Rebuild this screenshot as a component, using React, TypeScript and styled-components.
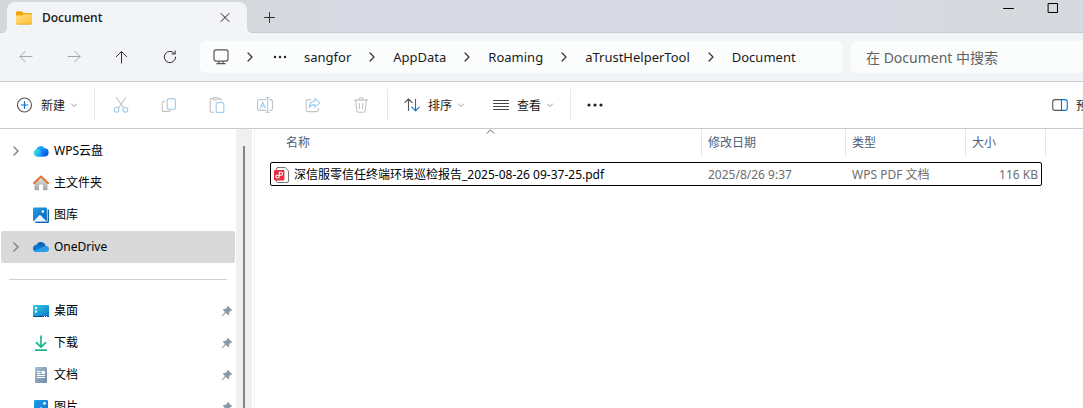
import React from "react";
import styled, { createGlobalStyle, css } from "styled-components";

const GlobalStyle = createGlobalStyle`
  *, *::before, *::after { box-sizing: border-box; }
  body {
    margin: 0;
    background: #fff;
    color: #1b1b1b;
    font: 12px/16px "Noto Sans", "Noto Sans CJK SC", sans-serif;
  }
  button, input { font: inherit; color: inherit; }
  svg { display: block; flex: none; }
`;

const Window = styled.div`
  display: flex;
  flex-direction: column;
  height: 100vh;
  overflow: hidden;
`;

const PlainButton = styled.button`
  display: flex;
  align-items: center;
  justify-content: center;
  flex: none;
  padding: 0;
  border: 0;
  background: none;
  white-space: nowrap;
`;

/* Title bar */

const TitleBar = styled.header`
  display: flex;
  align-items: flex-start;
  flex: none;
  height: 33px;
  padding: 2px 14px 0 7px;
  background: linear-gradient(90deg, #d3d7db 0%, #d5d8dd 24%, #d7dae4 34%, #d7dae5 80%, #d6d9dd 88%, #d6d9dd 97%, #d6d9e3 100%);
  box-shadow: inset 0 -1px #c8cad2;
`;

const Tab = styled.div`
  position: relative;
  display: flex;
  align-items: center;
  width: 240px;
  height: 31px;
  padding: 0 14px 0 9px;
  border-radius: 8px 8px 0 0;
  background: #f3f4f7;
  font-family: "Open Sans", sans-serif;
  font-weight: 600;

  &::before, &::after {
    content: "";
    position: absolute;
    bottom: 0;
    width: 4px;
    height: 4px;
  }
  &::before {
    right: 100%;
    background: radial-gradient(circle at 0 0, transparent 3px, #f3f4f7 4px);
  }
  &::after {
    left: 100%;
    background: radial-gradient(circle at 100% 0, transparent 3px, #f3f4f7 4px);
  }
`;

const TabTitle = styled.span`
  flex: 1;
  padding-left: 10px;
`;

const TabButton = styled(PlainButton)`
  width: 16px;
  height: 30px;
`;

const NewTabButton = styled(TabButton)`
  width: 44px;
`;

const CaptionButtons = styled.div`
  display: flex;
  gap: 11px;
  margin-left: auto;
`;

const CaptionButton = styled(PlainButton)`
  width: 33px;
  height: 11px;
`;

/* Navigation bar */

const NavBar = styled.div`
  display: flex;
  align-items: center;
  flex: none;
  height: 49px;
  padding-left: 2px;
  border-bottom: 1px solid #c8cad2;
  background: #f3f4f7;
`;

const NavButton = styled(PlainButton)`
  width: 48px;
  height: 32px;
  color: #333;
  &:disabled { color: #a3a5a8; }
`;

const AddressBar = styled.nav`
  display: flex;
  align-items: center;
  flex: 1;
  min-width: 0;
  height: 32px;
  margin: 0 8px 0 6px;
  padding-left: 13px;
  border-radius: 6px;
  background: #fbfdfd;
  overflow: hidden;
  font-size: 13px;
`;

const Separator = styled.span`
  display: flex;
  justify-content: center;
  flex: none;
  width: 42px;
`;

const Crumb = styled(PlainButton)<{ $first: boolean }>`
  margin-left: ${(p) => (p.$first ? 15 : 0)}px;
`;

const SearchBox = styled.input`
  flex: none;
  width: 232px;
  height: 32px;
  padding: 0 15px;
  border: 0;
  border-radius: 6px 0 0 6px;
  background: #fbfdfd;
  font-size: 14px;
  &::placeholder { color: #606264; opacity: 1; }
`;

/* Command bar */

const CommandBar = styled.div`
  display: flex;
  align-items: center;
  flex: none;
  height: 47px;
  border-bottom: 1px solid #c8cad2;
  background: #fff;
`;

const Command = styled(PlainButton)<{ $width: number }>`
  justify-content: flex-start;
  gap: 5px;
  width: ${(p) => p.$width}px;
  height: 32px;
`;

const CommandLabel = styled.span`
  padding: 2px 0 0 3px;
`;

const IconCommand = styled(PlainButton)`
  width: 48px;
  height: 32px;
`;

const CommandGroup = styled.div<{ $start: number; $end?: number }>`
  display: flex;
  padding: 0 ${(p) => p.$end ?? 0}px 0 ${(p) => p.$start}px;
  border-right: 1px solid #e9e9ec;
`;

const PreviewCommand = styled(Command)`
  margin-left: auto;
  overflow: hidden;
`;

/* Body */

const Body = styled.div`
  display: flex;
  flex: 1;
  min-height: 0;
`;

const Sidebar = styled.nav`
  flex: none;
  width: 236px;
  padding: 6px 1px 0;
  overflow: hidden;
  color: #000;
`;

const SideList = styled.ul`
  margin: 0;
  padding: 0;
  list-style: none;
`;

const SideItem = styled.li<{ $selected?: boolean }>`
  display: flex;
  align-items: center;
  height: 32px;
  padding: 0 2px 0 8px;
  border-radius: 2px;
  ${(p) => p.$selected && css`background: #d9d9d9;`}
`;

const Expander = styled.span`
  display: flex;
  justify-content: center;
  width: 13px;
  margin-right: 11px;
`;

const SideLink = styled.a`
  display: flex;
  align-items: center;
  flex: 1;
  gap: 5px;
  color: inherit;
  text-decoration: none;
`;

const SideDivider = styled.hr`
  height: 1px;
  margin: 16px 8px 15px;
  border: 0;
  background: #d0d0d0;
`;

const ScrollTrack = styled.div`
  display: flex;
  justify-content: center;
  flex: none;
  width: 16px;
  padding-top: 17px;
  background: #f0f0f0;
`;

const ScrollThumb = styled.div`
  width: 2px;
  background: #858585;
`;

const Content = styled.main`
  flex: 1;
  min-width: 0;
  margin-left: 2px;
  padding-left: 15px;
  border-left: 1px solid #f3f3f3;
  overflow: hidden;
`;

const FileTable = styled.table`
  width: 772px;
  table-layout: fixed;
  border-spacing: 0;
`;

const HeadCell = styled.th<{ $indent: number; $edge?: number }>`
  position: relative;
  height: 33px;
  padding: 6px 0 0 ${(p) => p.$indent}px;
  vertical-align: top;
  text-align: left;
  font-weight: 400;
  color: #4c607a;

  &::after {
    content: "";
    position: absolute;
    top: 0;
    right: -${(p) => p.$edge ?? 0}px;
    width: 1px;
    height: 27px;
    background: #e5e5e5;
  }
`;

const SortMark = styled.svg`
  position: absolute;
  top: 0;
  left: 216px;
`;

const FileRow = styled.tr`
  outline: 1px solid #000;
  outline-offset: -1px;
  border-radius: 2px;
`;

const Cell = styled.td<{ $right?: boolean }>`
  height: 24px;
  padding: 2px 4px 0 6px;
  color: #6d6d6d;
  white-space: nowrap;
  text-align: ${(p) => (p.$right ? "right" : "left")};
`;

const FileName = styled.a`
  display: flex;
  align-items: center;
  gap: 4px;
  margin-left: -2px;
  color: #000;
  text-decoration: none;
`;

/* Icons */

const Stroke = ({ d, color = "currentColor", size = 16, width = 1 }: { d: string; color?: string; size?: number; width?: number }) => (
  <svg width={size} height={size} viewBox={`0 0 ${size} ${size}`} fill="none" stroke={color} strokeWidth={width} strokeLinecap="round" strokeLinejoin="round">
    <path d={d} />
  </svg>
);

const ChevronRight = ({ color = "#333", width = 1.2 }: { color?: string; width?: number }) => (
  <Stroke size={10} color={color} width={width} d="M3 1 7 5 3 9" />
);
const ChevronDown = () => <Stroke size={8} color="#999" d="M1.5 3 4 5.5 6.5 3" />;

const Dots = ({ r, gap }: { r: number; gap: number }) => (
  <svg width="18" height="16" viewBox="0 0 18 16" fill="#222">
    <circle cx={9 - gap} cy="8" r={r} />
    <circle cx="9" cy="8" r={r} />
    <circle cx={9 + gap} cy="8" r={r} />
  </svg>
);

const FolderIcon = () => (
  <svg width="16" height="14" viewBox="0 0 16 14">
    <defs>
      <linearGradient id="folder" x1="0" y1="0" x2="1" y2="1">
        <stop stopColor="#ffe08a" />
        <stop offset="1" stopColor="#ffc02e" />
      </linearGradient>
    </defs>
    <path d="M0 1.5Q0 .3 1.2 .3H5.3Q6 .3 6.5 .9L7.8 2H15Q16 2 16 3V6H0Z" fill="#f2a60d" />
    <path d="M0 4.6H5.5Q6.2 4.6 6.8 4L7.6 3.2H15Q16 3.2 16 4.2V12.3Q16 13.5 14.8 13.5H1.2Q0 13.5 0 12.3Z" fill="url(#folder)" />
    <path d="M.3 12.8H15.7Q15.4 13.6 14.8 13.6H1.2Q.5 13.6 .3 12.8Z" fill="#e6a325" />
  </svg>
);

const MonitorIcon = () => (
  <svg width="16" height="16" viewBox="0 0 16 16" fill="none" stroke="#555" strokeWidth="1.2">
    <rect x="1" y=".9" width="14" height="11.2" rx="2" />
    <path d="M6 12.3V14.5M10 12.3V14.5M3.5 14.7H12.5" />
  </svg>
);

const NewIcon = () => (
  <svg width="16" height="16" viewBox="0 0 16 16" fill="none" strokeLinecap="round">
    <circle cx="7.5" cy="8" r="7" stroke="#555" strokeWidth="1.1" />
    <path d="M7.5 4.7V11.3M4.2 8H10.8" stroke="#0a74cc" strokeWidth="1.2" />
  </svg>
);

const GREY = "#c3c4c5";
const BLUE = "#9fcdf0";

const CutIcon = () => (
  <svg width="16" height="16" viewBox="0 0 16 16" fill="none" strokeWidth="1.1" strokeLinecap="round">
    <path d="M3.5 .8 10.6 11M12.5 .8 5.4 11" stroke={GREY} />
    <circle cx="3.6" cy="12.7" r="2.4" stroke={BLUE} />
    <circle cx="12.4" cy="12.7" r="2.4" stroke={BLUE} />
  </svg>
);
const CopyIcon = () => (
  <svg width="16" height="16" viewBox="0 0 16 16" fill="none" strokeWidth="1.1" strokeLinecap="round">
    <path d="M4 4.2H3.2Q1.2 4.2 1.2 6.2V12.4Q1.2 14.4 3.2 14.4H7.6Q9.4 14.4 9.8 12.9" stroke={GREY} />
    <rect x="6.2" y="1.6" width="8.3" height="10.6" rx="2" stroke={BLUE} />
  </svg>
);
const PasteIcon = () => (
  <svg width="16" height="16" viewBox="0 0 16 16" fill="none" strokeWidth="1.1" strokeLinecap="round">
    <path d="M5 15.3H2.4Q1.2 15.3 1.2 14V2.8Q1.2 1.6 2.4 1.6H4M9.5 1.6H11Q12.2 1.6 12.2 2.8V3.8" stroke={GREY} />
    <rect x="4" y=".6" width="5.5" height="2.1" rx="1" stroke={GREY} />
    <rect x="7.2" y="5.6" width="7.6" height="9.8" rx="1" stroke={BLUE} />
  </svg>
);
const RenameIcon = () => (
  <svg width="18" height="16" viewBox="0 0 18 16" fill="none" strokeWidth="1.1" strokeLinecap="round" strokeLinejoin="round">
    <path d="M9.5 2.6H3.8Q1.5 2.6 1.5 4.8V11.2Q1.5 13.4 3.8 13.4H9.5M13.8 2.6H14.4Q16.5 2.6 16.5 4.8V11.2Q16.5 13.4 14.4 13.4H13.8" stroke={GREY} />
    <path d="M4.2 11 6.7 5 9.2 11M5 9H8.4M11.6 .8V15.2M9.8 .7H13.4M9.8 15.3H13.4" stroke={BLUE} />
  </svg>
);
const ShareIcon = () => (
  <svg width="16" height="16" viewBox="0 0 16 16" fill="none" strokeWidth="1.1" strokeLinecap="round" strokeLinejoin="round">
    <path d="M5.8 2.6H3.3Q1.2 2.6 1.2 4.7V12.5Q1.2 14.6 3.3 14.6H11.4Q13.5 14.6 13.5 12.5V11.3" stroke={GREY} />
    <path d="M9.8 1.4 15 5.8 9.8 10.2V7.6Q6.2 7.4 4.2 10.6 4.6 4.4 9.8 3.9Z" stroke={BLUE} />
  </svg>
);
const TrashIcon = () => (
  <svg width="16" height="16" viewBox="0 0 16 16" fill="none" stroke={GREY} strokeWidth="1.1" strokeLinecap="round" strokeLinejoin="round">
    <path d="M1.2 3.1H14.8M5.8 3Q5.8 .8 8 .8T10.2 3M2.6 3.2 3.8 13.8Q4 15.3 5.4 15.3H10.6Q12 15.3 12.2 13.8L13.4 3.2M6.4 6.5V11.7M9.6 6.5V11.7" />
  </svg>
);
const SortIcon = () => (
  <svg width="16" height="16" viewBox="0 0 16 16" fill="none" strokeWidth="1.1" strokeLinecap="round" strokeLinejoin="round">
    <path d="M4.5 13.4V2M.8 5.7 4.5 2 8.2 5.7" stroke="#555" />
    <path d="M11.5 2.2V13.8M7.8 10.1 11.5 13.8 15.2 10.1" stroke="#0a74cc" />
  </svg>
);
const ViewIcon = () => <Stroke color="#444" d="M.5 3.5H15.5M.5 6.5H15.5M.5 9.5H15.5M.5 12.5H15.5" />;
const PreviewIcon = () => (
  <svg width="16" height="16" viewBox="0 0 16 16" fill="none" strokeWidth="1.1">
    <path d="M9.5 2.6H3.2Q.7 2.6 .7 5V11Q.7 13.4 3.2 13.4H9.5" stroke="#555" />
    <path d="M9.5 2.6H12.8Q15.3 2.6 15.3 5V11Q15.3 13.4 12.8 13.4H9.5Z" stroke="#0a74cc" />
  </svg>
);

const WpsCloudIcon = () => (
  <svg width="16" height="16" viewBox="0 0 16 16">
    <defs>
      <linearGradient id="wps" x1="0" y1="0" x2="1" y2=".7">
        <stop stopColor="#35c8f5" />
        <stop offset=".5" stopColor="#1a96fa" />
        <stop offset="1" stopColor="#0a50e0" />
      </linearGradient>
      <linearGradient id="wpsFront" x1="0" y1="0" x2="1" y2=".6">
        <stop stopColor="#4be8cf" />
        <stop offset=".5" stopColor="#2cc4ec" />
        <stop offset="1" stopColor="#1a8df5" />
      </linearGradient>
    </defs>
    <path d="M4.5 13.5A3.6 3.6 0 0 1 3.2 6.6 4.6 4.6 0 0 1 11.6 5.3 4.1 4.1 0 0 1 11.4 13.5Z" fill="url(#wps)" />
    <path d="M4.5 13.5A3.6 3.6 0 1 1 7.7 8.3Q8.6 12 10.5 13.5Z" fill="url(#wpsFront)" />
  </svg>
);
const HomeIcon = () => (
  <svg width="16" height="16" viewBox="0 0 16 16">
    <defs>
      <linearGradient id="wall" x1="0" y1="0" x2="0" y2="1">
        <stop stopColor="#e2e2e2" />
        <stop offset="1" stopColor="#a5a5a7" />
      </linearGradient>
    </defs>
    <path d="M1.5 7.5 8 1.5 14.5 7.5V14.2Q14.5 15.2 13.5 15.2H10V10.5Q10 9.5 9 9.5H7Q6 9.5 6 10.5V15.2H2.5Q1.5 15.2 1.5 14.2Z" fill="url(#wall)" />
    <path d="M.9 8.2 8 1.4 15.1 8.2" fill="none" stroke="#e5701f" strokeWidth="1.9" strokeLinecap="round" strokeLinejoin="round" />
  </svg>
);
const GalleryIcon = () => (
  <svg width="16" height="16" viewBox="0 0 16 16">
    <defs>
      <linearGradient id="gallery" x1="0" y1="0" x2="1" y2="1">
        <stop stopColor="#1f9fe6" />
        <stop offset="1" stopColor="#0862b8" />
      </linearGradient>
    </defs>
    <path d="M14.6 2.5H15.3Q16 2.5 16 3.2V14.8Q16 16 14.8 16H3Q2.2 16 2.2 15.2V14.8H13.4Q14.6 14.8 14.6 13.6Z" fill="#0b66b8" />
    <rect y=".5" width="13.9" height="13.8" rx="1.2" fill="url(#gallery)" />
    <path d="M1 13.7 6.3 8.2Q6.9 7.6 7.5 8.2L13 13.7Q12.8 14 12 14H2Q1.2 14 1 13.7Z" fill="#eef7ff" />
    <circle cx="9.8" cy="4.5" r="1.3" fill="#fff" />
  </svg>
);
const PicturesIcon = () => (
  <svg width="16" height="16" viewBox="0 0 16 16">
    <defs>
      <linearGradient id="pictures" x1="0" y1="0" x2="1" y2="1">
        <stop stopColor="#1f9fe6" />
        <stop offset="1" stopColor="#0f6fd0" />
      </linearGradient>
    </defs>
    <rect x="1" y="1" width="14" height="14" rx="1.2" fill="url(#pictures)" />
    <path d="M2 14 7.3 8.5Q8 7.9 8.7 8.5L14 14Q13.8 14.5 13 14.5H3Q2.2 14.5 2 14Z" fill="#eef7ff" />
    <circle cx="11.5" cy="4.4" r="1.3" fill="#fff" />
  </svg>
);
const OneDriveIcon = () => (
  <svg width="16" height="16" viewBox="0 0 16 16">
    <path d="M3.6 5.4A4.9 4.9 0 0 1 12.6 6.6L8 10Z" fill="#0a64b8" />
    <path d="M2.9 13A3.6 3.6 0 0 1 .1 8.4Q1.2 5.6 4.2 5.6 6 5.6 9.8 8.6L4 13Z" fill="#0b78d1" />
    <path d="M9.4 8.2Q11 6.4 12.8 6.7 16 7.2 16 10 16 13 12.9 13H3Q1.8 13 1 11.9Z" fill="#2a9de8" />
  </svg>
);
const DesktopIcon = () => (
  <svg width="16" height="16" viewBox="0 0 16 16">
    <defs>
      <linearGradient id="desk" x1="0" y1="0" x2="1" y2="1">
        <stop stopColor="#2ed3e0" />
        <stop offset="1" stopColor="#0b6fd0" />
      </linearGradient>
    </defs>
    <rect y="2" width="16" height="12" rx="1" fill="url(#desk)" />
    <path d="M0 13H16Q16 14 15 14H1Q0 14 0 13Z" fill="#0b4a88" />
    <path d="M2 4H4V6H2ZM2 7.5H4V9.5H2ZM11 13H12V14H11ZM13 13H14V14H13Z" fill="#fff" />
  </svg>
);
const DownloadIcon = () => (
  <svg width="16" height="16" viewBox="0 0 16 16" fill="none" stroke="#1bb58f" strokeWidth="1.7" strokeLinecap="round" strokeLinejoin="round">
    <path d="M8 1V12M3.4 7.6 8 12.2 12.6 7.6M2.8 15.2H13.2" />
  </svg>
);
const DocumentIcon = () => (
  <svg width="16" height="16" viewBox="0 0 16 16">
    <defs>
      <linearGradient id="doc" x1="0" y1="0" x2="1" y2="1">
        <stop stopColor="#a9bed2" />
        <stop offset="1" stopColor="#6d89a8" />
      </linearGradient>
    </defs>
    <rect x="2" width="12" height="16" rx="1.2" fill="url(#doc)" />
    <path d="M4 4.5H7.5M4 6.5H7.5M4 8.5H12M4 10.5H12" stroke="#fff" />
    <rect x="8.6" y="4" width="3.4" height="3" fill="#fff" />
  </svg>
);
const PinIcon = () => (
  <svg width="12" height="12" viewBox="0 0 12 12" fill="#8b9aa5">
    <path d="M6.7 .8 11.2 5.2 10.4 5.9 9.7 5.8 8.2 7.5 8.2 9.6 7.3 10.3 4.9 8 1.2 11.3 .7 10.8 4 7.1 1.8 4.8 2.6 3.9 4.7 3.8 6.3 2.3 6.1 1.5Z" />
  </svg>
);
const PdfIcon = () => (
  <svg width="16" height="16" viewBox="0 0 16 16" fill="none">
    <path d="M3 .5H11.2L14.5 3.8V14Q14.5 15.5 13 15.5H3.8Q2.5 15.5 2.5 14.2V2Q2.5 .5 4 .5" fill="#fff" stroke="#777" />
    <rect x="0" y="3" width="10.4" height="10.4" rx="1" fill="#ee2d3c" />
    <path d="M5.3 9.6V5.2H7Q8.6 5.2 8.6 6.7T7 8.3H3.2Q1.8 8.3 1.8 9.6T3.4 11 5.3 9.6" stroke="#fff" strokeWidth="1.1" />
  </svg>
);

const crumbs = ["sangfor", "AppData", "Roaming", "aTrustHelperTool", "Document"];

const editCommands = [
  { label: "剪切", icon: <CutIcon /> },
  { label: "复制", icon: <CopyIcon /> },
  { label: "粘贴", icon: <PasteIcon /> },
  { label: "重命名", icon: <RenameIcon /> },
  { label: "共享", icon: <ShareIcon /> },
  { label: "删除", icon: <TrashIcon /> },
];

type Place = { name: string; icon: React.ReactNode; expandable?: boolean; selected?: boolean; pinned?: boolean };

const roots: Place[] = [
  { name: "WPS云盘", icon: <WpsCloudIcon />, expandable: true },
  { name: "主文件夹", icon: <HomeIcon /> },
  { name: "图库", icon: <GalleryIcon /> },
  { name: "OneDrive", icon: <OneDriveIcon />, expandable: true, selected: true },
];

const pinned: Place[] = [
  { name: "桌面", icon: <DesktopIcon />, pinned: true },
  { name: "下载", icon: <DownloadIcon />, pinned: true },
  { name: "文档", icon: <DocumentIcon />, pinned: true },
  { name: "图片", icon: <PicturesIcon />, pinned: true },
];

const Places = ({ items }: { items: Place[] }) => (
  <SideList>
    {items.map((p) => (
      <SideItem key={p.name} $selected={p.selected}>
        <Expander>{p.expandable && <ChevronRight color="#858585" width={1.5} />}</Expander>
        <SideLink href="#">
          {p.icon}
          {p.name}
        </SideLink>
        {p.pinned && <PinIcon />}
      </SideItem>
    ))}
  </SideList>
);

export default function App() {
  return (
    <Window>
      <GlobalStyle />
      <TitleBar>
        <Tab>
          <FolderIcon />
          <TabTitle>Document</TabTitle>
          <TabButton aria-label="关闭标签页">
            <Stroke size={10} color="#222" d="M1 .5 9 8.5M9 .5 1 8.5" />
          </TabButton>
        </Tab>
        <NewTabButton aria-label="新建标签页">
          <Stroke size={11} color="#333" d="M5.5 .5V10.5M.5 5.5H10.5" />
        </NewTabButton>
        <CaptionButtons>
          <CaptionButton aria-label="最小化">
            <Stroke size={11} color="#000" d="M.5 6.5H10.5" />
          </CaptionButton>
          <CaptionButton aria-label="最大化">
            <Stroke size={11} color="#000" d="M1.5 1.5H10.5V10.5H1.5Z" />
          </CaptionButton>
        </CaptionButtons>
      </TitleBar>

      <NavBar>
        <NavButton aria-label="后退" disabled>
          <Stroke d="M14 7.5H2M7.2 2.3 2 7.5 7.2 12.7" />
        </NavButton>
        <NavButton aria-label="前进" disabled>
          <Stroke d="M2 7.5H14M8.8 2.3 14 7.5 8.8 12.7" />
        </NavButton>
        <NavButton aria-label="向上">
          <Stroke d="M7.5 14V2.5M2.3 7.7 7.5 2.5 12.7 7.7" />
        </NavButton>
        <NavButton aria-label="刷新">
          <Stroke d="M12.6 4.6A5.7 5.7 0 1 0 13.7 8M13.2 2V5H10" />
        </NavButton>
        <AddressBar aria-label="地址">
          <PlainButton aria-label="此电脑">
            <MonitorIcon />
          </PlainButton>
          <Separator>
            <ChevronRight />
          </Separator>
          <PlainButton aria-label="更多位置">
            <Dots r={1.2} gap={5} />
          </PlainButton>
          {crumbs.map((c, i) => (
            <React.Fragment key={c}>
              {i > 0 && (
                <Separator>
                  <ChevronRight />
                </Separator>
              )}
              <Crumb $first={i === 0}>{c}</Crumb>
            </React.Fragment>
          ))}
        </AddressBar>
        <SearchBox type="search" aria-label="搜索" placeholder="在 Document 中搜索" />
      </NavBar>

      <CommandBar>
        <CommandGroup $start={17}>
          <Command $width={77}>
            <NewIcon />
            <CommandLabel>新建</CommandLabel>
            <ChevronDown />
          </Command>
        </CommandGroup>
        <CommandGroup $start={2} $end={2}>
          {editCommands.map((c) => (
            <IconCommand key={c.label} aria-label={c.label} disabled>
              {c.icon}
            </IconCommand>
          ))}
        </CommandGroup>
        <CommandGroup $start={16}>
          <Command $width={89}>
            <SortIcon />
            <CommandLabel>排序</CommandLabel>
            <ChevronDown />
          </Command>
          <Command $width={77}>
            <ViewIcon />
            <CommandLabel>查看</CommandLabel>
            <ChevronDown />
          </Command>
        </CommandGroup>
        <IconCommand aria-label="查看更多">
          <Dots r={1.6} gap={6} />
        </IconCommand>
        <PreviewCommand $width={31}>
          <PreviewIcon />
          <CommandLabel>预览</CommandLabel>
        </PreviewCommand>
      </CommandBar>

      <Body>
        <Sidebar aria-label="导航窗格">
          <Places items={roots} />
          <SideDivider />
          <Places items={pinned} />
        </Sidebar>
        <ScrollTrack>
          <ScrollThumb />
        </ScrollTrack>
        <Content>
          <FileTable>
            <colgroup>
              <col width="432" />
              <col width="144" />
              <col width="120" />
              <col width="76" />
            </colgroup>
            <thead>
              <tr>
                <HeadCell $indent={16}>
                  名称
                  <SortMark width="9" height="5" viewBox="0 0 9 5" fill="none" stroke="#666">
                    <path d="M.8 4.5 4.5 .8 8.2 4.5" />
                  </SortMark>
                </HeadCell>
                <HeadCell $indent={6}>修改日期</HeadCell>
                <HeadCell $indent={6}>类型</HeadCell>
                <HeadCell $indent={6} $edge={4}>大小</HeadCell>
              </tr>
            </thead>
            <tbody>
              <FileRow>
                <Cell>
                  <FileName href="#">
                    <PdfIcon />
                    深信服零信任终端环境巡检报告_2025-08-26 09-37-25.pdf
                  </FileName>
                </Cell>
                <Cell>2025/8/26 9:37</Cell>
                <Cell>WPS PDF 文档</Cell>
                <Cell $right>116 KB</Cell>
              </FileRow>
            </tbody>
          </FileTable>
        </Content>
      </Body>
    </Window>
  );
}
